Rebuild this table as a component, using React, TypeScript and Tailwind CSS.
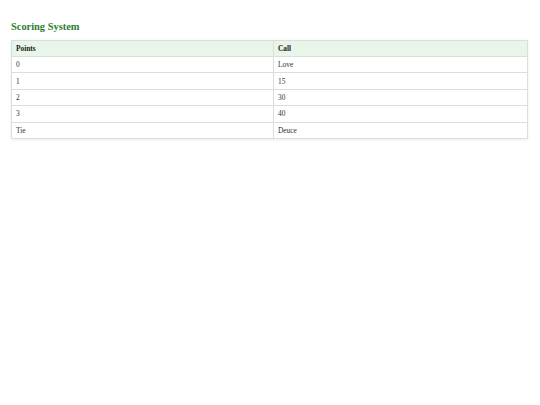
export default function App() {
  const rows = [
    ["0", "Love"],
    ["1", "15"],
    ["2", "30"],
    ["3", "40"],
    ["Tie", "Deuce"],
  ]

  return (
    <div className="min-h-[405px] bg-white px-[11px] pt-[20px] font-['Liberation_Serif',serif] text-[#333]">
      <h2 className="text-[10.4px] leading-[14px] font-bold text-[#2e7d32]">Scoring System</h2>
      <table className="mt-[6px] w-[517px] table-fixed border-collapse text-[7.4px] leading-[8px] shadow-[0_1px_3px_rgba(0,0,0,0.08)]">
        <thead>
          <tr className="bg-[#e8f5e9]">
            <th className="h-[16px] w-[262px] border border-[#dddddd] px-[4px] pt-[1px] text-left font-bold text-[#222]">Points</th>
            <th className="h-[16px] border border-[#dddddd] px-[4px] pt-[1px] text-left font-bold text-[#222]">Call</th>
          </tr>
        </thead>
        <tbody>
          {rows.map(([points, call]) => (
            <tr key={points}>
              <td className="h-[16.4px] border border-[#dddddd] px-[4px] pt-[1px]">{points}</td>
              <td className="h-[16.4px] border border-[#dddddd] px-[4px] pt-[1px]">{call}</td>
            </tr>
          ))}
        </tbody>
      </table>
    </div>
  )
}
